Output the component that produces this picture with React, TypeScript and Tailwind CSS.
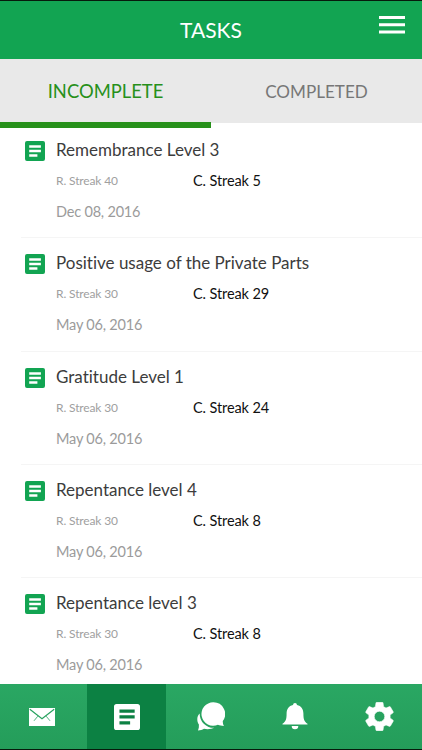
import React, {SVGProps} from 'react';
import clsx from 'clsx';

type IconProps = SVGProps<SVGSVGElement>;

interface Task {
    title: string;
    record: number;
    current: number;
    date: string;
}

const tasks: Task[] = [
    {title: 'Remembrance Level 3', record: 40, current: 5, date: 'Dec 08, 2016'},
    {title: 'Positive usage of the Private Parts', record: 30, current: 29, date: 'May 06, 2016'},
    {title: 'Gratitude Level 1', record: 30, current: 24, date: 'May 06, 2016'},
    {title: 'Repentance level 4', record: 30, current: 8, date: 'May 06, 2016'},
    {title: 'Repentance level 3', record: 30, current: 8, date: 'May 06, 2016'}
];

const ArticleIcon = (props: IconProps) => (
    <svg viewBox="0 0 20 20" fill="currentColor" fillRule="evenodd" {...props}>
        <path d="M2 0h16a2 2 0 0 1 2 2v16a2 2 0 0 1-2 2H2a2 2 0 0 1-2-2V2a2 2 0 0 1 2-2ZM4.2 4.2v2.5h11.7V4.2ZM4.2 8.7v2.5h11.7V8.7ZM4.2 13.2v2.5h8.2v-2.5Z"/>
    </svg>
);

const MenuIcon = (props: IconProps) => (
    <svg viewBox="0 0 26 18" fill="currentColor" {...props}>
        <path d="M0 0h26v3H0ZM0 7.3h26v3H0ZM0 14.6h26v3H0Z"/>
    </svg>
);

const MailIcon = (props: IconProps) => (
    <svg viewBox="0 0 26 18" {...props}>
        <path fill="currentColor" d="M0 0h26v18H0Z"/>
        <path d="M.8 1.2 13 10.8 25.2 1.2" fill="none" stroke="#27a25f" strokeWidth="1.2"/>
        <path d="M8.8 8.2 5 12.8M17.2 8.2l3.8 4.6" fill="none" stroke="#27a25f" strokeWidth=".8"/>
    </svg>
);

const ChatIcon = (props: IconProps) => (
    <svg viewBox="0 0 28 29" fill="currentColor" {...props}>
        <path d="M16.3.3a11.7 11.7 0 1 0 4.6 22.4c1.8.7 3.7 1.200 6 1.200-.9-1.500-1.200-3.100-1.100-4.900A11.700 11.700 0 0 0 16.300.3Z"/>
        <path d="M2.700 11.400C1 13 .2 15 .3 17.400c0 2 .6 3.700 1.600 5.100.2 2-.1 3.900-.9 5.900 2.300-.1 4.300-.6 6-1.600 4 .8 7.800.1 10.300-1.100A13.700 13.700 0 0 1 2.700 11.400Z"/>
    </svg>
);

const BellIcon = (props: IconProps) => (
    <svg viewBox="0 0 26 27" fill="currentColor" {...props}>
        <path d="M13 0a2 2 0 0 0-2 1.900C6.700 2.800 4.600 6.100 4.600 10.500c0 5.900-.8 7.900-4.100 10.300v.7h25v-.7c-3.300-2.400-4.100-4.400-4.100-10.300 0-4.400-2.100-7.700-6.400-8.600A2 2 0 0 0 13 0ZM9.700 22.900h6.600a3.300 3.300 0 0 1-6.600 0Z"/>
    </svg>
);

const GearIcon = (props: IconProps) => (
    <svg viewBox="1.8 1.8 20.4 20.4" fill="currentColor" stroke="currentColor" strokeWidth=".4" {...props}>
        <path d="M19.430 12.980c.04-.32.07-.64.07-.98s-.03-.66-.07-.98l2.110-1.650c.19-.15.24-.42.12-.64l-2-3.460c-.12-.22-.39-.3-.61-.22l-2.490 1c-.52-.4-1.080-.73-1.690-.98l-.38-2.650A.49.49 0 0 0 14 2h-4c-.25 0-.46.18-.49.42l-.38 2.650c-.61.25-1.170.59-1.690.98l-2.490-1c-.23-.09-.49 0-.61.22l-2 3.460c-.13.22-.07.49.12.64l2.110 1.650c-.04.32-.07.65-.07.98s.03.66.07.98l-2.110 1.650c-.19.15-.24.42-.12.64l2 3.460c.12.22.39.3.61.22l2.490-1c.52.4 1.080.73 1.690.98l.38 2.650c.03.24.24.42.49.42h4c.25 0 .46-.18.49-.42l.38-2.650c.61-.25 1.170-.59 1.690-.98l2.490 1c.23.09.49 0 .61-.22l2-3.460c.12-.22.07-.49-.12-.64l-2.110-1.650ZM12 15.700a3.700 3.700 0 1 1 0-7.400 3.700 3.700 0 0 1 0 7.400Z"/>
    </svg>
);

const navItems = [
    {name: 'mail', Icon: MailIcon, size: 'w-[26px] h-[18px]'},
    {name: 'tasks', Icon: ArticleIcon, size: 'w-[26px] h-[26px]'},
    {name: 'chat', Icon: ChatIcon, size: 'w-[28px] h-[29px]'},
    {name: 'alerts', Icon: BellIcon, size: 'w-[26px] h-[27px]'},
    {name: 'settings', Icon: GearIcon, size: 'w-[29px] h-[29px]'}
];

const TaskRow = ({task}: {task: Task}) => (
    <li className="ml-[21px] h-[113.3px] shrink-0 border-b border-[#f5f5f5] pt-[9px] pl-1 flex">
        <ArticleIcon className="w-5 h-5 mt-[7px] mr-[11px] shrink-0 text-[#12a452]"/>
        <div className="flex-1 whitespace-nowrap">
            <h2 className="text-[17px] leading-[31px] text-[#3c3c3c]">{task.title}</h2>
            <div className="flex leading-[32px]">
                <span className="w-[137px] text-[12px] tracking-[-0.13px] text-[#a0a0a0]">R. Streak {task.record}</span>
                <span className="text-[14.5px] tracking-[-0.1px] text-[#111]">C. Streak {task.current}</span>
            </div>
            <p className="text-[14.5px] tracking-[-0.2px] leading-[30px] text-[#9b9b9b]">{task.date}</p>
        </div>
    </li>
);

const App = () => (
    <div className="w-[422px] h-[750px] flex flex-col overflow-hidden bg-white font-['Lato',sans-serif] [font-variant-ligatures:none] border-y border-[#061a0c]">
        <header className="h-[58px] shrink-0 bg-[#12a452] text-white grid grid-cols-3">
            <h1 className="col-start-2 text-center text-[21px] leading-[58px]">TASKS</h1>
            <MenuIcon className="w-[26px] h-[18px] mt-[15px] mr-[17px] justify-self-end"/>
        </header>

        <div className="h-[64px] shrink-0 flex bg-[#e9e9e9] text-center leading-[65px]">
            <button className="w-[211px] h-[69px] shrink-0 border-b-[6px] border-[#27901a] text-[18.4px] text-[#27901a]">
                INCOMPLETE
            </button>
            <button className="flex-1 text-[17.1px] text-[#777]">COMPLETED</button>
        </div>

        <ul className="flex-1 min-h-0 overflow-hidden flex flex-col pt-[2px]">
            {tasks.map(task => (
                <TaskRow key={task.title} task={task}/>
            ))}
        </ul>

        <nav className="h-[65px] shrink-0 grid grid-cols-5 bg-linear-to-b from-[#2aa763] to-[#249d5a] text-white">
            {navItems.map(({name, Icon, size}) => (
                <button
                    key={name}
                    aria-label={name}
                    className={clsx(
                        'mx-[2.6px] flex items-center justify-center',
                        name === 'tasks' && 'bg-[#0c8143]'
                    )}>
                    <Icon className={size}/>
                </button>
            ))}
        </nav>
    </div>
);

export default App;
